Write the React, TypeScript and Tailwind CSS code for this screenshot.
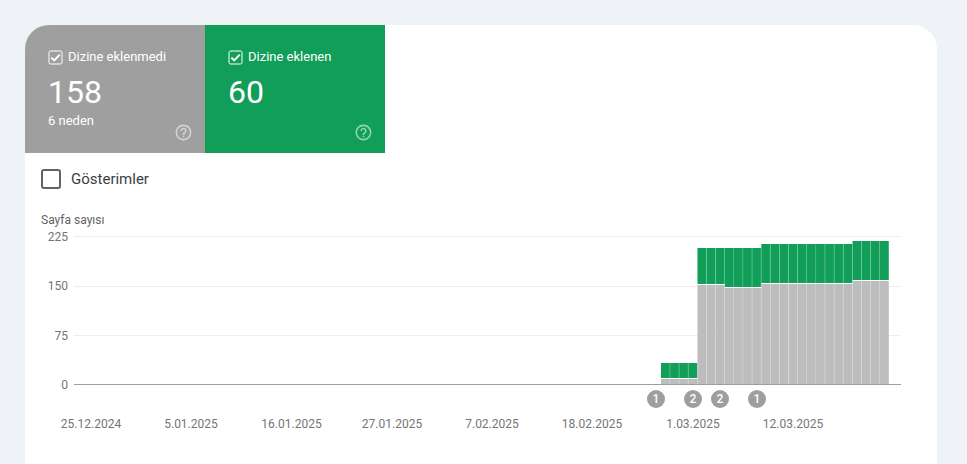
import { MdHelpOutline } from "react-icons/md";

const GREEN = "#119e59";
const GRAY = "#bdbdbd";

// [bar count, top y, split y] read off the chart
const barGroups: [number, number, number][] = [
  [4, 363, 378],
  [3, 248, 284],
  [4, 248, 287],
  [10, 244, 283],
  [4, 241, 280],
];

const yTicks = [
  { label: "225", y: 236.5, textY: 241 },
  { label: "150", y: 286.5, textY: 290 },
  { label: "75", y: 335.5, textY: 340 },
  { label: "0", y: 384.5, textY: 389 },
];

const dates = [
  { label: "25.12.2024", x: 91 },
  { label: "5.01.2025", x: 191 },
  { label: "16.01.2025", x: 291.5 },
  { label: "27.01.2025", x: 392 },
  { label: "7.02.2025", x: 492 },
  { label: "18.02.2025", x: 592 },
  { label: "1.03.2025", x: 693 },
  { label: "12.03.2025", x: 793 },
];

const annotations = [
  { label: "1", x: 656 },
  { label: "2", x: 693 },
  { label: "2", x: 720 },
  { label: "1", x: 757 },
];

function TickBox() {
  return (
    <svg width="15" height="15" viewBox="0 0 15 15" className="shrink-0">
      <rect x="1" y="1" width="13" height="13" rx="1.5" fill="none" stroke="white" strokeWidth="1" />
      <path d="M3.4 7.6 L6.2 10.4 L11.8 4.6" fill="none" stroke="white" strokeWidth="2" />
    </svg>
  );
}

function MetricTile({ label, value, sub, color }: { label: string; value: string; sub?: string; color: string }) {
  return (
    <div className={`flex h-[128px] w-[180px] justify-between pl-[23px] pr-[12px] pt-[24px] pb-[11px] text-white ${color}`}>
      <div>
        <div className="flex h-[16px] items-center gap-[5px] text-[13px] leading-[16px]">
          <TickBox />
          <span>{label}</span>
        </div>
        <div className="mt-[7px] text-[32px] leading-[40px]">{value}</div>
        {sub && <div className="mt-[1px] text-[13px] leading-[16px]">{sub}</div>}
      </div>
      <MdHelpOutline size={19} className="self-end opacity-55" />
    </div>
  );
}

function Chart() {
  const left = 661;
  const step = 9.12;
  let index = 0;
  const bars = barGroups.flatMap(([count, top, split]) =>
    Array.from({ length: count }, () => {
      const x = left + step * index;
      index += 1;
      return { x, top, split };
    }),
  );

  return (
    <svg width="967" height="274" viewBox="0 190 967 274" className="-ml-[25px] block" fontFamily="Roboto, sans-serif" fontSize="12">
      <text x="41" y="223.5" fill="#5f6368">Sayfa sayısı</text>
      {yTicks.map((t) => (
        <g key={t.label}>
          <line x1="74" x2="901" y1={t.y} y2={t.y} stroke={t.label === "0" ? "#9e9e9e" : "#eeeeee"} />
          <text x="68" y={t.textY} textAnchor="end" fill="#757575">{t.label}</text>
        </g>
      ))}
      {bars.map((b) => (
        <g key={b.x}>
          <rect x={b.x} y={b.top} width={step} height={b.split - b.top} fill={GREEN} />
          <rect x={b.x} y={b.split + 1} width={step} height={384 - b.split - 1} fill={GRAY} />
          <line x1={b.x + step} x2={b.x + step} y1={b.top} y2="384" stroke="white" strokeOpacity="0.45" strokeWidth="1" />
        </g>
      ))}
      {annotations.map((a) => (
        <g key={a.x}>
          <circle cx={a.x} cy="399" r="9" fill="#9e9e9e" />
          <text x={a.x} y="403" textAnchor="middle" fill="white" fontWeight="500">{a.label}</text>
        </g>
      ))}
      {dates.map((d) => (
        <text key={d.label} x={d.x} y="427.5" textAnchor="middle" fill="#757575">{d.label}</text>
      ))}
    </svg>
  );
}

export default function App() {
  return (
    <div className="h-[464px] w-[967px] overflow-hidden bg-[#eff3f8] pl-[25px] pt-[25px] font-['Roboto',sans-serif]">
      <div className="h-[439px] w-[912px] overflow-hidden rounded-t-[24px] bg-white">
        <div className="flex">
          <MetricTile label="Dizine eklenmedi" value="158" sub="6 neden" color="bg-[#a09f9f]" />
          <MetricTile label="Dizine eklenen" value="60" color="bg-[#119e59]" />
        </div>
        <div className="mb-[1px] flex h-[36px] items-end gap-[10px] pl-[16px]">
          <span className="h-[20px] w-[20px] rounded-[3px] border-2 border-[#5f6368]" />
          <span className="text-[15px] leading-[20px] text-[#3c4043]">Gösterimler</span>
        </div>
        <Chart />
      </div>
    </div>
  );
}
